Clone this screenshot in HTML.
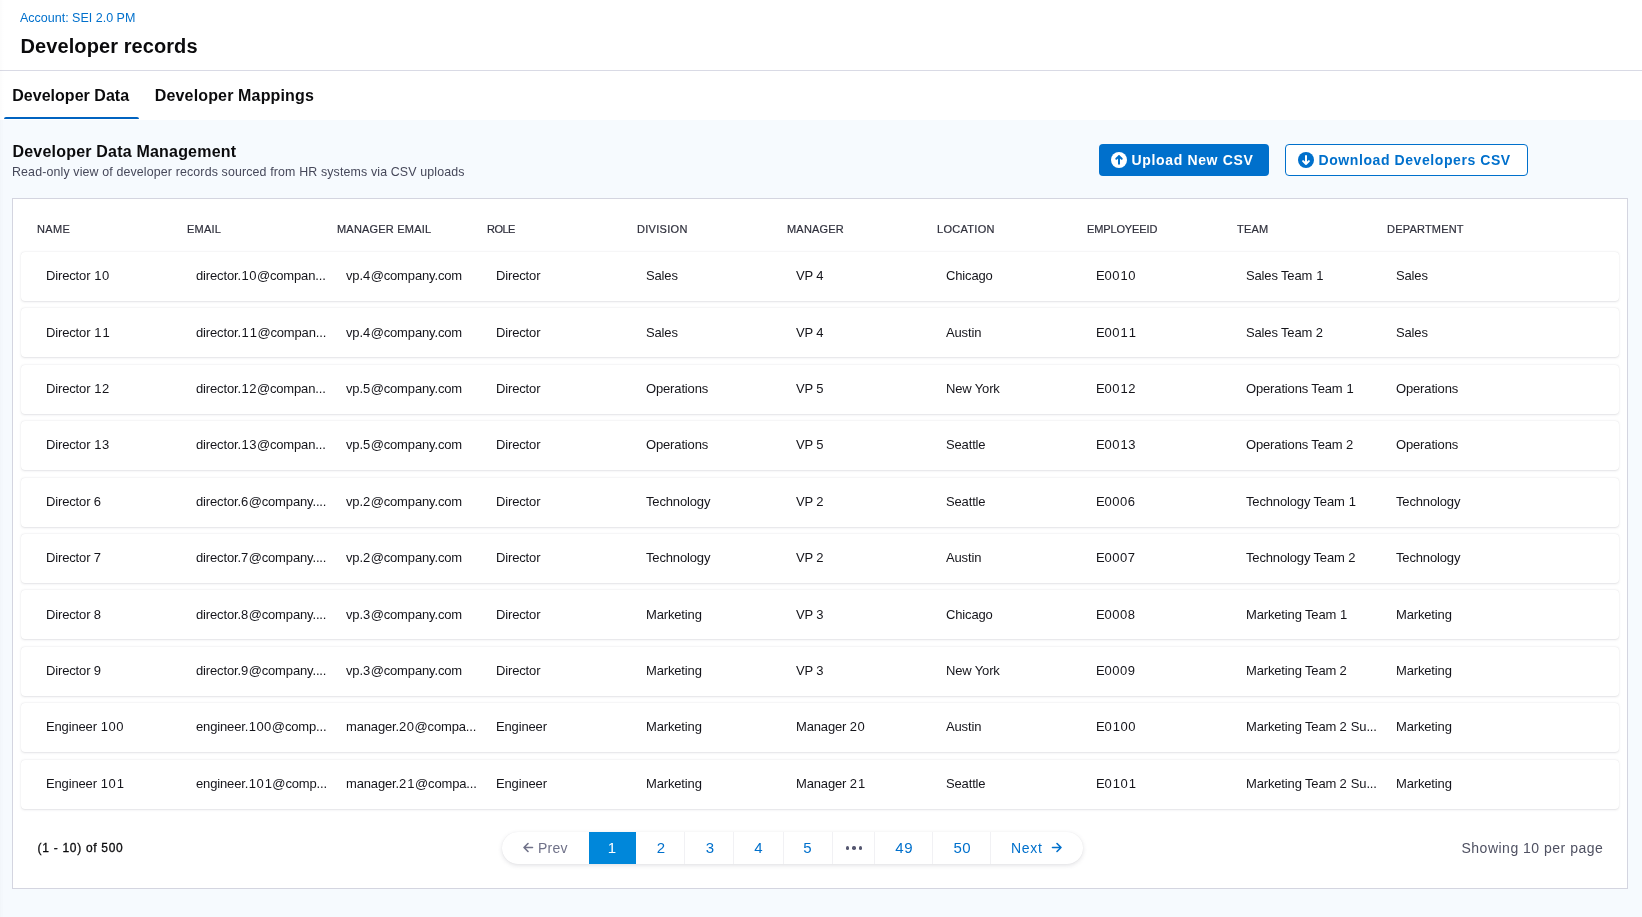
<!DOCTYPE html>
<html><head><meta charset="utf-8"><style>
html,body{margin:0;padding:0;}
body{width:1642px;height:917px;position:relative;overflow:hidden;background:#f6fafe;font-family:"Liberation Sans",sans-serif;}
.t{position:absolute;white-space:nowrap;line-height:1.149;}
.td{font-size:13px;color:#15151b;letter-spacing:-0.15px;}
.td b{font-weight:400;letter-spacing:0.5px;}
.td i{font-style:normal;padding-left:0.5px;}
.hdr{position:absolute;left:0;top:0;width:1642px;height:70px;background:#fff;border-bottom:1px solid #d9dae5;}
.tabs{position:absolute;left:0;top:71px;width:1642px;height:49px;background:#fff;}
.uline{position:absolute;left:4px;top:117px;width:135px;height:2px;background:#0063c0;border-radius:2px 2px 0 0;}
.leftshade{position:absolute;left:0;top:0;width:4px;height:917px;background:linear-gradient(to right,rgba(0,0,30,0.014),rgba(0,0,30,0));}
.btn1{position:absolute;left:1099px;top:144px;width:170px;height:32px;background:#0070cc;border-radius:4px;}
.btn2{position:absolute;left:1285px;top:144px;width:241px;height:30px;background:#fff;border:1px solid #0070cc;border-radius:4px;}
.box{position:absolute;left:12px;top:198px;width:1614px;height:689px;background:#fff;border:1px solid #d4d5e0;}
.card{position:absolute;left:21px;width:1598px;height:49px;background:#fff;border-radius:4px;box-shadow:0 0 1px rgba(40,41,61,0.08), 0 0.5px 2px rgba(96,97,112,0.17);}
.pill{position:absolute;left:502px;top:832px;width:581px;height:32px;background:#fff;border-radius:16px;box-shadow:0 0 1px rgba(40,41,61,0.08), 0 1.5px 4px rgba(96,97,112,0.18);overflow:hidden;}
.sep{position:absolute;top:0;width:1px;height:32px;background:#f1f1f4;}
.pact{position:absolute;left:87px;top:0;width:47px;height:32px;background:#0087da;}
.wrap{position:absolute;left:0;top:0;width:1642px;height:917px;will-change:transform;}
</style></head><body><div class="wrap">
<div class="hdr"></div><div class="tabs"></div><div class="uline"></div><div class="leftshade"></div>
<div class="t acc" style="left:20px;top:10.69px;font-size:12.5px;color:#0070cc;">Account: SEI 2.0 PM</div>
<div class="t ttl" style="left:20.6px;top:34.90px;font-size:20px;color:#0b0b0d;font-weight:700;letter-spacing:0.08px;">Developer records</div>
<div class="t tab" style="left:12.2px;top:86.52px;font-size:16px;color:#0b0b0d;font-weight:700;letter-spacing:0.03px;">Developer Data</div>
<div class="t tab" style="left:154.8px;top:86.52px;font-size:16px;color:#0b0b0d;font-weight:700;letter-spacing:0.15px;">Developer Mappings</div>
<div class="t st" style="left:12.5px;top:143.22px;font-size:16px;color:#0b0b0d;font-weight:700;letter-spacing:0.2px;">Developer Data Management</div>
<div class="t sub" style="left:12px;top:165.18px;font-size:12.4px;color:#46485a;letter-spacing:0.14px;">Read-only view of developer records sourced from HR systems via CSV uploads</div>
<div class="btn1"></div><div class="btn2"></div>
<svg style="position:absolute;left:1110.9px;top:152px" width="16" height="16" viewBox="0 0 16 16"><circle cx="8" cy="8" r="8" fill="#fff"/><path d="M8 11.75V4.1M5.3 6.8L8 4.1L10.7 6.8" stroke="#0070cc" stroke-width="2" fill="none" stroke-linecap="round" stroke-linejoin="round"/></svg>
<div class="t b1" style="left:1131.5px;top:152.33px;font-size:14px;color:#fff;font-weight:700;letter-spacing:0.65px;">Upload New CSV</div>
<svg style="position:absolute;left:1298px;top:152px" width="16" height="16" viewBox="0 0 16 16"><circle cx="8" cy="8" r="8" fill="#0070cc"/><path d="M8 4.1V11.9M5.1 9.1L8 12L10.9 9.1" stroke="#fff" stroke-width="2" fill="none" stroke-linecap="round" stroke-linejoin="round"/></svg>
<div class="t b2" style="left:1318.5px;top:152.33px;font-size:14px;color:#0070cc;font-weight:700;letter-spacing:0.58px;">Download Developers CSV</div>
<div class="box"></div>
<div class="t th" style="left:37px;top:223.04px;font-size:11px;color:#2f303c;letter-spacing:0.35px;-webkit-text-stroke:0.2px #2f303c;">NAME</div>
<div class="t th" style="left:187px;top:223.04px;font-size:11px;color:#2f303c;letter-spacing:0.2px;-webkit-text-stroke:0.2px #2f303c;">EMAIL</div>
<div class="t th" style="left:337px;top:223.04px;font-size:11px;color:#2f303c;letter-spacing:0.2px;-webkit-text-stroke:0.2px #2f303c;">MANAGER EMAIL</div>
<div class="t th" style="left:487px;top:223.04px;font-size:11px;color:#2f303c;letter-spacing:-0.55px;-webkit-text-stroke:0.2px #2f303c;">ROLE</div>
<div class="t th" style="left:637px;top:223.04px;font-size:11px;color:#2f303c;letter-spacing:0.3px;-webkit-text-stroke:0.2px #2f303c;">DIVISION</div>
<div class="t th" style="left:787px;top:223.04px;font-size:11px;color:#2f303c;letter-spacing:0.2px;-webkit-text-stroke:0.2px #2f303c;">MANAGER</div>
<div class="t th" style="left:937px;top:223.04px;font-size:11px;color:#2f303c;letter-spacing:0.3px;-webkit-text-stroke:0.2px #2f303c;">LOCATION</div>
<div class="t th" style="left:1087px;top:223.04px;font-size:11px;color:#2f303c;letter-spacing:-0.13px;-webkit-text-stroke:0.2px #2f303c;">EMPLOYEEID</div>
<div class="t th" style="left:1237px;top:223.04px;font-size:11px;color:#2f303c;letter-spacing:0.2px;-webkit-text-stroke:0.2px #2f303c;">TEAM</div>
<div class="t th" style="left:1387px;top:223.04px;font-size:11px;color:#2f303c;letter-spacing:0.2px;-webkit-text-stroke:0.2px #2f303c;">DEPARTMENT</div>
<div class="card" style="top:252.00px"></div>
<div class="t td" style="left:46px;top:268.765px;">Director <b><i>1</i>0</b></div>
<div class="t td" style="left:196px;top:268.765px;">director.<b><i>1</i>0</b>@compan...</div>
<div class="t td" style="left:346px;top:268.765px;">vp.<b>4</b>@company.com</div>
<div class="t td" style="left:496px;top:268.765px;">Director</div>
<div class="t td" style="left:646px;top:268.765px;">Sales</div>
<div class="t td" style="left:796px;top:268.765px;">VP <b>4</b></div>
<div class="t td" style="left:946px;top:268.765px;">Chicago</div>
<div class="t td" style="left:1096px;top:268.765px;">E<b>00<i>1</i>0</b></div>
<div class="t td" style="left:1246px;top:268.765px;">Sales Team <b><i>1</i></b></div>
<div class="t td" style="left:1396px;top:268.765px;">Sales</div>
<div class="card" style="top:308.40px"></div>
<div class="t td" style="left:46px;top:325.765px;">Director <b><i>1</i><i>1</i></b></div>
<div class="t td" style="left:196px;top:325.765px;">director.<b><i>1</i><i>1</i></b>@compan...</div>
<div class="t td" style="left:346px;top:325.765px;">vp.<b>4</b>@company.com</div>
<div class="t td" style="left:496px;top:325.765px;">Director</div>
<div class="t td" style="left:646px;top:325.765px;">Sales</div>
<div class="t td" style="left:796px;top:325.765px;">VP <b>4</b></div>
<div class="t td" style="left:946px;top:325.765px;">Austin</div>
<div class="t td" style="left:1096px;top:325.765px;">E<b>00<i>1</i><i>1</i></b></div>
<div class="t td" style="left:1246px;top:325.765px;">Sales Team <b>2</b></div>
<div class="t td" style="left:1396px;top:325.765px;">Sales</div>
<div class="card" style="top:364.80px"></div>
<div class="t td" style="left:46px;top:381.765px;">Director <b><i>1</i>2</b></div>
<div class="t td" style="left:196px;top:381.765px;">director.<b><i>1</i>2</b>@compan...</div>
<div class="t td" style="left:346px;top:381.765px;">vp.<b>5</b>@company.com</div>
<div class="t td" style="left:496px;top:381.765px;">Director</div>
<div class="t td" style="left:646px;top:381.765px;">Operations</div>
<div class="t td" style="left:796px;top:381.765px;">VP <b>5</b></div>
<div class="t td" style="left:946px;top:381.765px;">New York</div>
<div class="t td" style="left:1096px;top:381.765px;">E<b>00<i>1</i>2</b></div>
<div class="t td" style="left:1246px;top:381.765px;">Operations Team <b><i>1</i></b></div>
<div class="t td" style="left:1396px;top:381.765px;">Operations</div>
<div class="card" style="top:421.20px"></div>
<div class="t td" style="left:46px;top:437.765px;">Director <b><i>1</i>3</b></div>
<div class="t td" style="left:196px;top:437.765px;">director.<b><i>1</i>3</b>@compan...</div>
<div class="t td" style="left:346px;top:437.765px;">vp.<b>5</b>@company.com</div>
<div class="t td" style="left:496px;top:437.765px;">Director</div>
<div class="t td" style="left:646px;top:437.765px;">Operations</div>
<div class="t td" style="left:796px;top:437.765px;">VP <b>5</b></div>
<div class="t td" style="left:946px;top:437.765px;">Seattle</div>
<div class="t td" style="left:1096px;top:437.765px;">E<b>00<i>1</i>3</b></div>
<div class="t td" style="left:1246px;top:437.765px;">Operations Team <b>2</b></div>
<div class="t td" style="left:1396px;top:437.765px;">Operations</div>
<div class="card" style="top:477.60px"></div>
<div class="t td" style="left:46px;top:494.765px;">Director <b>6</b></div>
<div class="t td" style="left:196px;top:494.765px;">director.<b>6</b>@company....</div>
<div class="t td" style="left:346px;top:494.765px;">vp.<b>2</b>@company.com</div>
<div class="t td" style="left:496px;top:494.765px;">Director</div>
<div class="t td" style="left:646px;top:494.765px;">Technology</div>
<div class="t td" style="left:796px;top:494.765px;">VP <b>2</b></div>
<div class="t td" style="left:946px;top:494.765px;">Seattle</div>
<div class="t td" style="left:1096px;top:494.765px;">E<b>0006</b></div>
<div class="t td" style="left:1246px;top:494.765px;">Technology Team <b><i>1</i></b></div>
<div class="t td" style="left:1396px;top:494.765px;">Technology</div>
<div class="card" style="top:534.00px"></div>
<div class="t td" style="left:46px;top:550.765px;">Director <b>7</b></div>
<div class="t td" style="left:196px;top:550.765px;">director.<b>7</b>@company....</div>
<div class="t td" style="left:346px;top:550.765px;">vp.<b>2</b>@company.com</div>
<div class="t td" style="left:496px;top:550.765px;">Director</div>
<div class="t td" style="left:646px;top:550.765px;">Technology</div>
<div class="t td" style="left:796px;top:550.765px;">VP <b>2</b></div>
<div class="t td" style="left:946px;top:550.765px;">Austin</div>
<div class="t td" style="left:1096px;top:550.765px;">E<b>0007</b></div>
<div class="t td" style="left:1246px;top:550.765px;">Technology Team <b>2</b></div>
<div class="t td" style="left:1396px;top:550.765px;">Technology</div>
<div class="card" style="top:590.40px"></div>
<div class="t td" style="left:46px;top:607.765px;">Director <b>8</b></div>
<div class="t td" style="left:196px;top:607.765px;">director.<b>8</b>@company....</div>
<div class="t td" style="left:346px;top:607.765px;">vp.<b>3</b>@company.com</div>
<div class="t td" style="left:496px;top:607.765px;">Director</div>
<div class="t td" style="left:646px;top:607.765px;">Marketing</div>
<div class="t td" style="left:796px;top:607.765px;">VP <b>3</b></div>
<div class="t td" style="left:946px;top:607.765px;">Chicago</div>
<div class="t td" style="left:1096px;top:607.765px;">E<b>0008</b></div>
<div class="t td" style="left:1246px;top:607.765px;">Marketing Team <b><i>1</i></b></div>
<div class="t td" style="left:1396px;top:607.765px;">Marketing</div>
<div class="card" style="top:646.80px"></div>
<div class="t td" style="left:46px;top:663.765px;">Director <b>9</b></div>
<div class="t td" style="left:196px;top:663.765px;">director.<b>9</b>@company....</div>
<div class="t td" style="left:346px;top:663.765px;">vp.<b>3</b>@company.com</div>
<div class="t td" style="left:496px;top:663.765px;">Director</div>
<div class="t td" style="left:646px;top:663.765px;">Marketing</div>
<div class="t td" style="left:796px;top:663.765px;">VP <b>3</b></div>
<div class="t td" style="left:946px;top:663.765px;">New York</div>
<div class="t td" style="left:1096px;top:663.765px;">E<b>0009</b></div>
<div class="t td" style="left:1246px;top:663.765px;">Marketing Team <b>2</b></div>
<div class="t td" style="left:1396px;top:663.765px;">Marketing</div>
<div class="card" style="top:703.20px"></div>
<div class="t td" style="left:46px;top:719.765px;">Engineer <b><i>1</i>00</b></div>
<div class="t td" style="left:196px;top:719.765px;">engineer.<b><i>1</i>00</b>@comp...</div>
<div class="t td" style="left:346px;top:719.765px;">manager.<b>20</b>@compa...</div>
<div class="t td" style="left:496px;top:719.765px;">Engineer</div>
<div class="t td" style="left:646px;top:719.765px;">Marketing</div>
<div class="t td" style="left:796px;top:719.765px;">Manager <b>20</b></div>
<div class="t td" style="left:946px;top:719.765px;">Austin</div>
<div class="t td" style="left:1096px;top:719.765px;">E<b>0<i>1</i>00</b></div>
<div class="t td" style="left:1246px;top:719.765px;">Marketing Team <b>2</b> Su...</div>
<div class="t td" style="left:1396px;top:719.765px;">Marketing</div>
<div class="card" style="top:759.60px"></div>
<div class="t td" style="left:46px;top:776.765px;">Engineer <b><i>1</i>0<i>1</i></b></div>
<div class="t td" style="left:196px;top:776.765px;">engineer.<b><i>1</i>0<i>1</i></b>@comp...</div>
<div class="t td" style="left:346px;top:776.765px;">manager.<b>2<i>1</i></b>@compa...</div>
<div class="t td" style="left:496px;top:776.765px;">Engineer</div>
<div class="t td" style="left:646px;top:776.765px;">Marketing</div>
<div class="t td" style="left:796px;top:776.765px;">Manager <b>2<i>1</i></b></div>
<div class="t td" style="left:946px;top:776.765px;">Seattle</div>
<div class="t td" style="left:1096px;top:776.765px;">E<b>0<i>1</i>0<i>1</i></b></div>
<div class="t td" style="left:1246px;top:776.765px;">Marketing Team <b>2</b> Su...</div>
<div class="t td" style="left:1396px;top:776.765px;">Marketing</div>
<div class="t ft" style="left:37.6px;top:842.14px;font-size:12px;color:#0b0b0d;letter-spacing:0.7px;-webkit-text-stroke:0.3px #0b0b0d;">(1 - 10) of 500</div>
<div class="t sh" style="left:1603.3px;top:840.33px;font-size:14px;color:#4f5162;letter-spacing:0.5px;transform:translateX(-100%);">Showing 10 per page</div>
<div class="pill"><div class="pact"></div><div class="sep" style="left:182px"></div><div class="sep" style="left:231px"></div><div class="sep" style="left:281px"></div><div class="sep" style="left:330px"></div><div class="sep" style="left:372px"></div><div class="sep" style="left:430px"></div><div class="sep" style="left:488px"></div></div>
<svg style="position:absolute;left:522px;top:841px" width="12" height="13" viewBox="0 0 12 13"><path d="M10.5 6.5H2M6 2.5L2 6.5L6 10.5" stroke="#707289" stroke-width="1.6" fill="none" stroke-linecap="round" stroke-linejoin="round"/></svg>
<div class="t pv" style="left:538px;top:840.33px;font-size:14px;color:#707289;letter-spacing:0.2px;">Prev</div>
<div class="t" style="left:582.0px;width:60px;text-align:center;top:838.82px;font-size:15px;color:#fff;letter-spacing:0px;">1</div>
<div class="t" style="left:631.0px;width:60px;text-align:center;top:838.82px;font-size:15px;color:#0070cc;letter-spacing:0px;">2</div>
<div class="t" style="left:680.0px;width:60px;text-align:center;top:838.82px;font-size:15px;color:#0070cc;letter-spacing:0px;">3</div>
<div class="t" style="left:728.5px;width:60px;text-align:center;top:838.82px;font-size:15px;color:#0070cc;letter-spacing:0px;">4</div>
<div class="t" style="left:777.5px;width:60px;text-align:center;top:838.82px;font-size:15px;color:#0070cc;letter-spacing:0px;">5</div>
<div class="t" style="left:874.3px;width:60px;text-align:center;top:838.82px;font-size:15px;color:#0070cc;letter-spacing:0.6px;">49</div>
<div class="t" style="left:932.15px;width:60px;text-align:center;top:838.82px;font-size:15px;color:#0070cc;letter-spacing:0.3px;">50</div>
<div style="position:absolute;left:845.6999999999999px;top:846.3px;width:3.4px;height:3.4px;border-radius:50%;background:#555770"></div>
<div style="position:absolute;left:852.3px;top:846.3px;width:3.4px;height:3.4px;border-radius:50%;background:#555770"></div>
<div style="position:absolute;left:858.9px;top:846.3px;width:3.4px;height:3.4px;border-radius:50%;background:#555770"></div>
<div class="t nx" style="left:1011px;top:840.33px;font-size:14px;color:#0070cc;letter-spacing:0.7px;">Next</div>
<svg style="position:absolute;left:1051px;top:841px" width="12" height="13" viewBox="0 0 12 13"><path d="M1.5 6.5H10M6 2.5L10 6.5L6 10.5" stroke="#0070cc" stroke-width="1.6" fill="none" stroke-linecap="round" stroke-linejoin="round"/></svg>
</div></body></html>
